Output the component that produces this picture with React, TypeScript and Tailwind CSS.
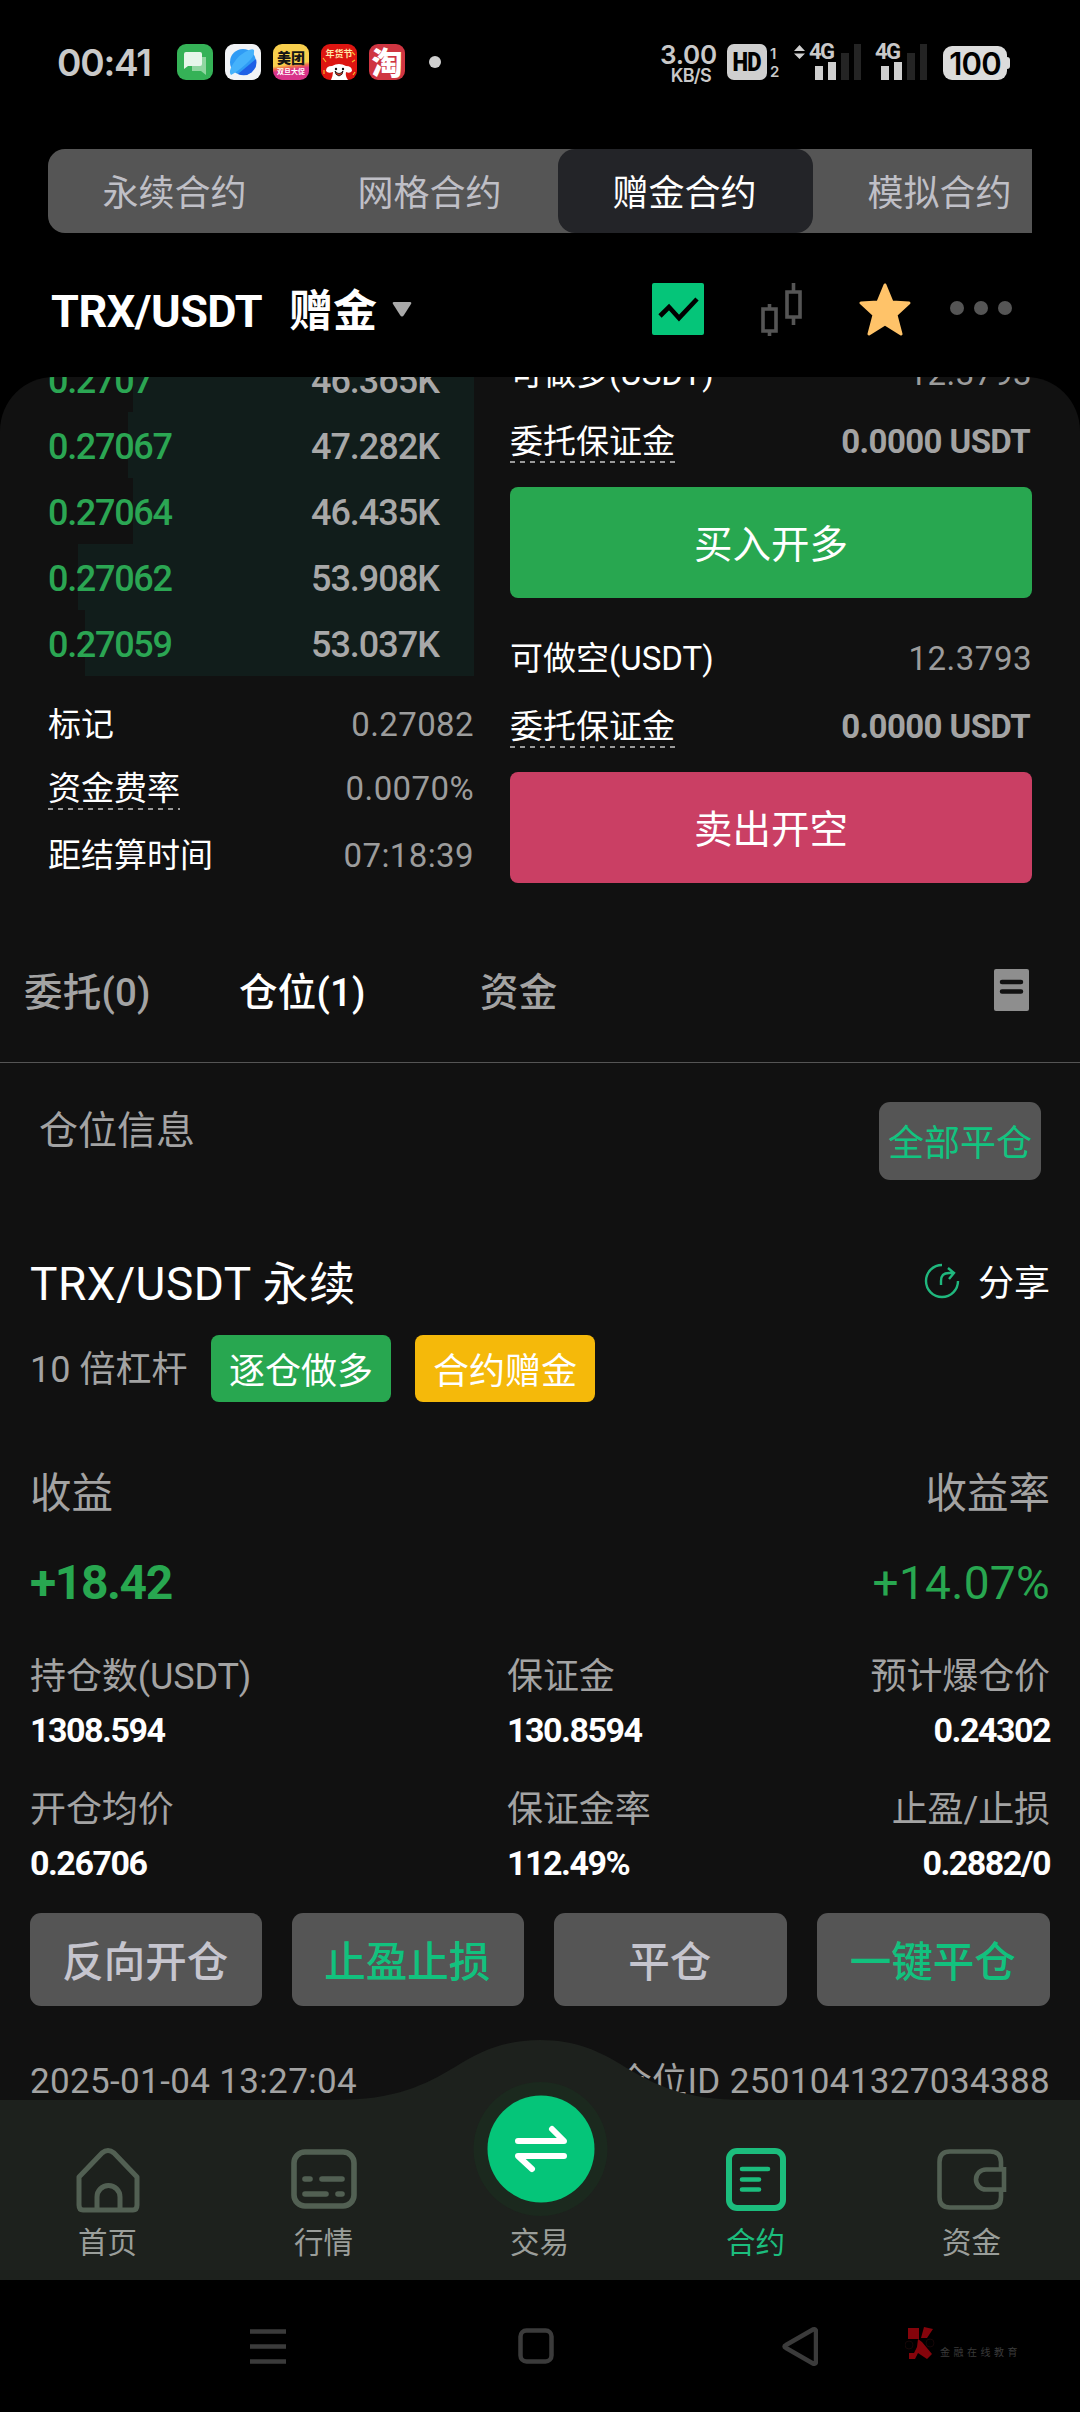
import React from "react";

const bids = [
  { price: "0.2707", qty: "46.365K", bar: 341 },
  { price: "0.27067", qty: "47.282K", bar: 346 },
  { price: "0.27064", qty: "46.435K", bar: 341 },
  { price: "0.27062", qty: "53.908K", bar: 396 },
  { price: "0.27059", qty: "53.037K", bar: 389 },
];

function StatusBar() {
  return (
    <header className="flex h-[149px] shrink-0 items-start justify-between pl-[57px] pr-[70px] pt-[42px] text-[#c9c9c9]">
      <div className="flex h-10 items-center">
        <span className="w-[120px] font-['Inter'] text-[37px] font-semibold leading-none tracking-[-1.2px]">00:41</span>
        <div className="flex gap-3">
          <svg className="size-9" viewBox="0 0 36 36">
            <rect width="36" height="36" rx="9" fill="#35b257" />
            <path d="M15 13h14v18l-5-4H15z" fill="#8fd6a0" />
            <path d="M9 8h14q2 0 2 2v10q0 2-2 2H11l-4 3V10q0-2 2-2z" fill="#e6f6ea" />
          </svg>
          <svg className="size-9" viewBox="0 0 36 36">
            <rect width="36" height="36" rx="9" fill="#f1f3f6" />
            <circle cx="18" cy="18" r="13" fill="#2f9bf5" />
            <path d="M31 15A13 13 0 0 1 13 30L31 15z" fill="#1e5fe6" />
            <path d="M6 31Q3 28 8 20Q14 10 24 6q6-2 5 2q1 4-8 12T6 31z" fill="#45b2fb" />
          </svg>
          <div className="flex size-9 flex-col items-center overflow-hidden rounded-[9px] bg-[linear-gradient(172deg,#f8cf4d_0%,#f8cf4d_55%,#ef6c4d_62%,#d9338a_70%)] font-['Noto_Sans_CJK_SC'] leading-none">
            <span className="mt-[6px] text-[14px] font-black text-[#151515]">美团</span>
            <span className="mt-[4px] whitespace-nowrap text-[7px] font-bold text-white">双旦大促</span>
          </div>
          <div className="relative size-9 overflow-hidden rounded-[9px] bg-[#dd1511] text-center leading-none">
            <span className="block pt-[5px] font-['Noto_Sans_CJK_SC'] text-[9px] font-bold text-[#ffe9a8]">年货节</span>
            <svg className="absolute inset-0 size-9" viewBox="0 0 36 36">
              <path d="M10 36q2-5 2-8q-5 2-7-1q0-5 6-5q7-4 14 0q6 0 6 5q-2 3-6 1q-1 4 2 8z" fill="#fff" />
              <circle cx="15" cy="25" r="1.2" fill="#111" />
              <circle cx="22" cy="25" r="1.2" fill="#111" />
              <path d="M14 27q4 5 8 0q0 4-4 5q-4-1-4-5z" fill="#d32" stroke="#111" strokeWidth=".8" />
              <path d="M2 14l3 4M31 8l3 3M31 18l3-2M3 26v4M32 31l2-3" stroke="#f8b52b" strokeWidth="1.2" />
            </svg>
          </div>
          <div className="flex size-9 items-center justify-center rounded-[9px] bg-[#cf3541] font-['Noto_Sans_CJK_SC'] text-[31px] font-black leading-none text-white">
            <span className="-mt-[3px]">淘</span>
          </div>
        </div>
        <i className="ml-6 size-3 rounded-full bg-[#d0d0d0]" />
      </div>

      <div className="flex items-start pt-[2px] font-['Inter'] leading-none">
        <div className="flex w-[60px] flex-col items-end">
          <span className="text-[26px] font-semibold leading-[22px] tracking-[-0.2px]">3.00</span>
          <span className="mr-[6px] mt-px text-[18px] font-semibold leading-[17px] tracking-[-0.7px]">KB/S</span>
        </div>
        <div className="ml-[10px] flex h-9 w-[40px] items-center justify-center rounded-[7px] bg-[#cfcfcf] font-['Roboto'] text-[26px] font-black tracking-[-1px] text-black">
          <span className="scale-x-[.85]">HD</span>
        </div>
        <div className="ml-[3px] flex w-[12px] flex-col text-[15px] font-semibold">
          <span className="h-[18px] pt-[2px]">1</span>
          <span className="h-[18px] pt-[2px]">2</span>
        </div>
        <svg className="ml-3 mt-px h-[14px] w-[11px]" viewBox="0 0 11 14" fill="#cfcfcf">
          <path d="M0 6L5.5 0L11 6zM0 8.500L5.500 14L11 8.500z" />
        </svg>
        <Signal className="ml-1" />
        <Signal className="ml-[14px]" />
        <div className="ml-4 mt-[2px] flex items-center">
          <div className="flex h-[34px] w-[64px] items-center justify-center rounded-[9px] bg-[#dcdcdc] text-[31px] font-semibold tracking-[-0.8px] text-black">100</div>
          <i className="h-3 w-[3px] rounded-r bg-[#dcdcdc]" />
        </div>
      </div>
    </header>
  );
}

function Signal({ className }: { className: string }) {
  return (
    <div className={"relative h-9 w-[52px] " + className}>
      <span className="absolute -top-[2px] left-0 font-['Roboto'] text-[22px] font-bold leading-[20px] tracking-[-1.5px]">4G</span>
      <div className="ml-[6px] flex h-9 items-end gap-[5px]">
        <i className="h-[14px] w-[8px] bg-[#cfcfcf]" />
        <i className="h-[18px] w-[8px] bg-[#cfcfcf]" />
        <i className="h-[27px] w-[8px] bg-[#242424]" />
        <i className="h-9 w-[7px] bg-[#242424]" />
      </div>
    </div>
  );
}

function ContractTabs() {
  const tabs = ["永续合约", "网格合约", "赠金合约", "模拟合约"];
  return (
    <nav className="mx-12 flex h-[84px] shrink-0 overflow-hidden rounded-l-[17px] bg-[#555555]">
      {tabs.map((t, i) => (
        <div
          key={t}
          className={
            "flex w-[255px] shrink-0 items-center justify-center rounded-[17px] pr-[2px] pt-[5px] text-[36px] leading-none " +
            (i === 2 ? "bg-[#232428] text-white" : "text-[#bfbfc6]")
          }
        >
          {t}
        </div>
      ))}
    </nav>
  );
}

function PairHeader() {
  return (
    <div className="flex h-[144px] shrink-0 items-start justify-between pl-[51px] pr-[68px] pt-[49px]">
      <div className="flex h-[54px] items-center text-[45px] font-bold leading-none text-white">
        <span className="w-[238px] pt-1 tracking-[-0.5px]">TRX/USDT</span>
        <span className="pt-[6px] text-[44px]">赠金</span>
        <svg className="ml-[15px] mt-px h-[15px] w-[20px]" viewBox="0 0 20 15" fill="#a9a9a9">
          <path d="M2 0h16q2 0 1 2l-7 11q-2 3-4 0L1 2Q0 0 2 0z" />
        </svg>
      </div>
      <div className="flex items-start pt-[1px]">
        <svg className="mr-[57px] h-[52px] w-[52px]" viewBox="0 0 52 52">
          <rect width="52" height="52" rx="2" fill="#05c579" />
          <path d="M8 33l9-9 10 11 18-19" fill="none" stroke="#000" strokeWidth="4.600" />
        </svg>
        <svg className="mr-[56px] h-[53px] w-[42px]" viewBox="0 0 42 53" fill="none" stroke="#555" strokeWidth="3.600">
          <path d="M2 26h13v22H2zM8.500 21v5M8.500 48v5M26 9h13v25H26zM32.500 0v9M32.500 34v8" />
        </svg>
        <svg className="mr-[39px] h-[53px] w-[52px]" viewBox="0 0 52 53">
          <path d="M26 2l7 17 17 1-13 12 5 19-16-10-16 10 5-19L2 20l17-1z" fill="#ffc369" stroke="#ffc369" strokeWidth="3" strokeLinejoin="round" />
        </svg>
        <div className="mt-[18px] flex gap-[10px]">
          <i className="size-[14px] rounded-full bg-[#555]" />
          <i className="size-[14px] rounded-full bg-[#555]" />
          <i className="size-[14px] rounded-full bg-[#555]" />
        </div>
      </div>
    </div>
  );
}

function Dashed({ children }: { children: React.ReactNode }) {
  return (
    <span className="relative">
      {children}
      <i className="absolute -bottom-[5px] left-0 h-[2px] w-full bg-[repeating-linear-gradient(90deg,#9a9a9a_0_5px,transparent_5px_10px)]" />
    </span>
  );
}

function OrderBook() {
  return (
    <div className="-mt-[31px] w-[426px]">
      {bids.map((b) => (
        <div key={b.price} className="relative flex h-[66px] items-center justify-between pr-[35px] pt-1 text-[36px] font-medium leading-none tracking-[-1.3px]">
          <i className="absolute inset-y-0 right-0 bg-[#111d1b]" style={{ width: b.bar }} />
          <span className="relative text-[#2ba653]">{b.price}</span>
          <span className="relative tracking-[-1px] text-[#a8a8a8]">{b.qty}</span>
        </div>
      ))}
      <div className="pt-4 text-[33px] leading-none text-white">
        <div className="flex h-16 items-center justify-between">
          <span>标记</span>
          <span className="tracking-[0.4px] text-[#9c9c9c]">0.27082</span>
        </div>
        <div className="flex h-16 items-center justify-between pt-px">
          <Dashed>资金费率</Dashed>
          <span className="tracking-[0.4px] text-[#9c9c9c]">0.0070%</span>
        </div>
        <div className="flex h-[70px] items-center justify-between pt-px">
          <span>距结算时间</span>
          <span className="tracking-[0.4px] text-[#9c9c9c]">07:18:39</span>
        </div>
      </div>
    </div>
  );
}

function OrderSide({ label, action, long }: { label: string; action: string; long: boolean }) {
  return (
    <div className="text-[33px] leading-none text-white">
      <div className="flex h-[66px] items-center justify-between">
        <span>{label}</span>
        <span className="tracking-[0.5px] text-[#9c9c9c]">12.3793</span>
      </div>
      <div className="flex h-[70px] items-center justify-between">
        <Dashed>委托保证金</Dashed>
        <span className="pr-[2px] font-bold tracking-[-0.6px] text-[#a3a3a3]">0.0000 USDT</span>
      </div>
      <div
        className={
          "mt-[11px] flex h-[111px] items-center justify-center rounded-[8px] pt-[6px] text-[38.500px] " +
          (long ? "bg-[#28a750]" : "bg-[#ca3f64]")
        }
      >
        {action}
      </div>
    </div>
  );
}

function ListTabs() {
  return (
    <div className="mt-[39px] flex h-[141px] shrink-0 items-center border-b border-[#555] pl-6 pt-[2px] text-[38.5px] font-medium leading-none tracking-[0.2px] text-[#a3a3a3]">
      <span className="w-[215px]">委托(0)</span>
      <span className="w-[241px] text-white">仓位(1)</span>
      <span>资金</span>
      <svg className="-mt-[6px] ml-auto mr-[51px] h-[42px] w-[35px]" viewBox="0 0 35 42">
        <rect width="35" height="42" rx="2" fill="#8e8e8e" />
        <path d="M8 13h19M8 22.500h19" stroke="#111" strokeWidth="4.500" strokeLinecap="round" />
      </svg>
    </div>
  );
}

function Stat({ label, value, align }: { label: string; value: string; align: string }) {
  return (
    <div className={"flex flex-col leading-none " + align}>
      <span className="flex h-[54px] items-center pt-[2px] text-[36px] tracking-[-0.1px] text-[#a3a3a3]">{label}</span>
      <span className="flex h-[54px] items-center text-[34px] font-bold tracking-[-1.5px] text-white">{value}</span>
    </div>
  );
}

function Position() {
  return (
    <section className="px-[30px] leading-none">
      <div className="flex h-[185px] items-start justify-between pl-[9px] pr-[9px] pt-[39px]">
        <span className="flex h-[58px] items-center text-[39px] text-[#a3a3a3]">仓位信息</span>
        <span className="flex h-[78px] w-[162px] items-center justify-center rounded-[11px] bg-[#555] pt-[6px] text-[36px] text-[#12c480]">全部平仓</span>
      </div>
      <div className="flex h-[70px] items-center justify-between pt-[2px] text-white">
        <span className="text-[46px] tracking-[0.5px]">TRX/USDT 永续</span>
        <span className="flex items-center text-[36px]">
          <svg className="mr-[18px] -mt-[6px] size-9" viewBox="0 0 36 36" fill="none" stroke="#20b87e" strokeWidth="2.400">
            <path d="M18 2A16 16 0 1 0 34 18" />
            <path d="M17 22v-4q0-8 8-8h5M24 5l6 5-5 6" />
          </svg>
          分享
        </span>
      </div>
      <div className="mt-[17px] flex h-[67px] items-center text-[36px]">
        <span className="w-[181px] whitespace-nowrap pt-[3px] text-[#a3a3a3]">10 倍杠杆</span>
        <span className="flex h-[67px] w-[180px] items-center justify-center rounded-[8px] bg-[#28a750] pt-[7px] text-white">逐仓做多</span>
        <span className="ml-6 flex h-[67px] w-[180px] items-center justify-center rounded-[8px] bg-[#f5b90a] pt-[7px] text-white">合约赠金</span>
      </div>
      <div className="mt-[57px] flex h-[70px] items-center justify-between text-[41.500px] text-[#a3a3a3]">
        <span>收益</span>
        <span>收益率</span>
      </div>
      <div className="mt-[18px] flex h-[70px] items-center justify-between pt-[2px] text-[#28a750]">
        <span className="text-[48px] font-bold tracking-[-1.4px]">+18.42</span>
        <span className="text-[46px] tracking-[0.3px]">+14.07%</span>
      </div>
      <div className="mt-[32px] grid grid-cols-[477px_1fr_auto]">
        <Stat label="持仓数(USDT)" value="1308.594" align="items-start" />
        <Stat label="保证金" value="130.8594" align="items-start" />
        <Stat label="预计爆仓价" value="0.24302" align="items-end" />
      </div>
      <div className="mt-[25px] grid grid-cols-[477px_1fr_auto]">
        <Stat label="开仓均价" value="0.26706" align="items-start" />
        <Stat label="保证金率" value="112.49%" align="items-start" />
        <Stat label="止盈/止损" value="0.2882/0" align="items-end" />
      </div>
      <div className="mt-[23px] grid h-[93px] grid-cols-4 gap-[30px] text-[41.500px] font-medium">
        {["反向开仓", "止盈止损", "平仓", "一键平仓"].map((t, i) => (
          <div
            key={t}
            className={
              "-ml-px mr-px flex items-center justify-center whitespace-nowrap rounded-[11px] bg-[#555] pr-px pt-[7px] first:ml-0 last:mr-0 " +
              (i % 2 ? "text-[#12c17e]" : "text-[#c6c5ce]")
            }
          >
            {t}
          </div>
        ))}
      </div>
      <div className="mt-[44px] flex h-[60px] items-center justify-between pt-[2px] text-[35px] tracking-[0.35px] text-[#a3a3a3]">
        <span>2025-01-04 13:27:04</span>
        <span>仓位ID 2501041327034388</span>
      </div>
    </section>
  );
}

function NavItem({ label, active, children }: { label: string; active?: boolean; children?: React.ReactNode }) {
  return (
    <div className={"flex flex-1 flex-col items-center " + (active ? "text-[#1cbd7d]" : "text-[#9a9e9a]")}>
      <div className="flex h-[76px] items-start">{children}</div>
      <span className="flex h-[40px] items-center pr-px pt-px text-[29.500px] leading-none">{label}</span>
    </div>
  );
}

function BottomNav() {
  return (
    <nav className="absolute inset-x-0 bottom-0 h-[240px]">
      <svg className="absolute inset-0 h-[240px] w-[1080px]" viewBox="0 0 1080 240">
        <path d="M0 60H335C395 60 425 45 455 27C480 11 505 0 540 0S600 11 625 27C655 45 685 60 745 60H1080V240H0z" fill="#1d211d" />
        <circle cx="540.500" cy="109" r="67" fill="#1b291e" />
        <circle cx="541" cy="109" r="53.500" fill="#05c579" />
        <g fill="none" stroke="#fff" strokeWidth="6" strokeLinecap="round" strokeLinejoin="round">
          <path d="M518 101h46l-12-12M564 116h-46l14 13" />
        </g>
      </svg>
      <div className="relative flex pt-[107px]">
        <NavItem label="首页">
          <svg className="h-[66px] w-[66px]" viewBox="0 0 66 66" fill="none" stroke="#526053" strokeWidth="5" strokeLinejoin="round">
            <path d="M4 30L27 6q6-5 12 0l23 24v28q0 5-4 5H8q-4 0-4-5z" />
            <path d="M22 62V50a11.500 11.500 0 0 1 23 0v12" />
          </svg>
        </NavItem>
        <NavItem label="行情">
          <svg className="mt-[2px] h-[60px] w-[66px]" viewBox="0 0 66 60" fill="none" stroke="#526053" strokeWidth="5.600">
            <rect x="3" y="3" width="60" height="54" rx="11" />
            <path d="M14 30h5M31 30h20M14 45h21M47 45h4" strokeLinecap="round" />
          </svg>
        </NavItem>
        <NavItem label="交易" />
        <NavItem label="合约" active>
          <svg className="mt-px h-[63px] w-[60px]" viewBox="0 0 60 63" fill="none" stroke="currentColor" strokeWidth="6">
            <rect x="3" y="3" width="54" height="57" rx="8" />
            <path d="M16 21h26M16 31.500h17M16 41.500h17" strokeWidth="4.600" strokeLinecap="round" />
          </svg>
        </NavItem>
        <NavItem label="资金">
          <svg className="mt-[2px] h-[61px] w-[70px]" viewBox="0 0 70 61" fill="none" stroke="#526053" strokeWidth="4.600">
            <path d="M64 21V13Q64 2.500 53 2.500H13Q2.500 2.500 2.500 13V48Q2.500 58.500 13 58.500H53Q64 58.500 64 48V40" />
            <path d="M67 20.500H49a10 10 0 0 0 0 20H67zM67 18v25" />
          </svg>
        </NavItem>
      </div>
    </nav>
  );
}

function SystemBar() {
  return (
    <footer className="flex flex-1 items-start pl-[250px] pt-[47px]">
      <svg className="mt-px h-9 w-9" viewBox="0 0 36 36" stroke="#3b3b3b" strokeWidth="4.500">
        <path d="M0 3.500h36M0 18.500h36M0 33.500h36" />
      </svg>
      <svg className="ml-[232px] mt-px h-9 w-9" viewBox="0 0 36 36" fill="none" stroke="#3b3b3b" strokeWidth="4.500">
        <rect x="2.500" y="2.500" width="31" height="31" rx="6" />
      </svg>
      <svg className="ml-[228px] h-[39px] w-[36px]" viewBox="0 0 36 39" fill="none" stroke="#3b3b3b" strokeWidth="4.500" strokeLinejoin="round">
        <path d="M31 2.500q3-1 3 2v30q0 3-3 2L4 21q-3-1.500 0-3z" />
      </svg>
      <svg className="ml-[87px] h-[33px] w-[30px]" viewBox="0 0 30 33">
        <path d="M3 1h11v11H3zM19 0l9 2-6 9h-6zM13 12l4 3 10 12-5 5-9-6-3 6H4v-6h5l3-6z" fill="#85040b" />
        <circle cx="4" cy="18" r="4" fill="none" stroke="#160607" />
        <circle cx="25" cy="16" r="4" fill="none" stroke="#160607" />
      </svg>
      <span className="ml-[5px] mt-[21px] text-[10px] leading-none tracking-[3.5px] text-[#3a3a3a]">金融在线教育</span>
    </footer>
  );
}

export default function App() {
  return (
    <div className="flex h-[2412px] w-[1080px] flex-col overflow-hidden bg-black font-['Roboto','Noto_Sans_CJK_SC',sans-serif]">
      <StatusBar />
      <ContractTabs />
      <PairHeader />
      <main className="relative flex h-[1903px] shrink-0 flex-col overflow-hidden rounded-t-[54px] bg-[#111111]">
        <div className="flex h-[506px] shrink-0 items-start justify-between px-12">
          <OrderBook />
          <div className="-mt-[37px] flex w-[522px] flex-col gap-[27px]">
            <OrderSide label="可做多(USDT)" action="买入开多" long />
            <OrderSide label="可做空(USDT)" action="卖出开空" long={false} />
          </div>
        </div>
        <ListTabs />
        <Position />
        <BottomNav />
      </main>
      <SystemBar />
    </div>
  );
}
